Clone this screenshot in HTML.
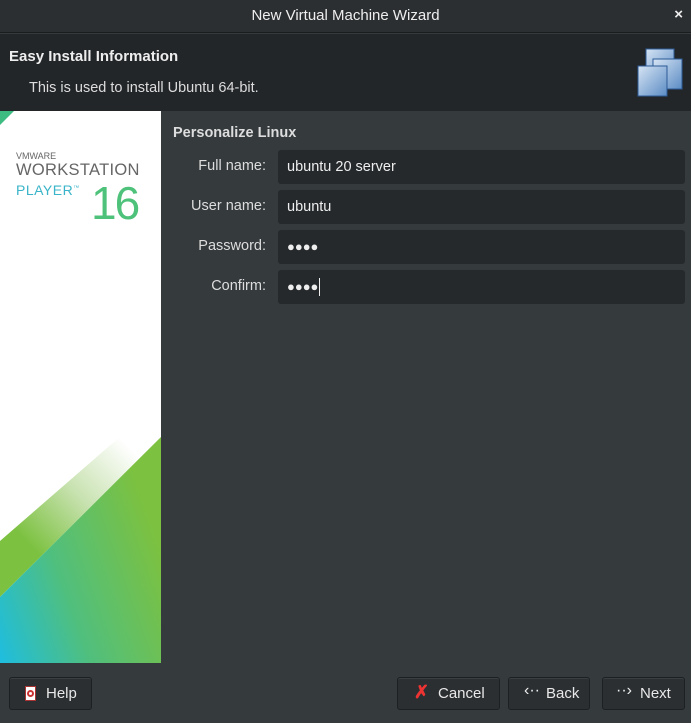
<!DOCTYPE html>
<html><head><meta charset="utf-8"><style>
*{margin:0;padding:0;box-sizing:border-box}
body{width:691px;height:723px;background:#353a3d;font-family:"Liberation Sans",sans-serif;color:#e8e8e8;position:relative;overflow:hidden;font-size:14px}
.abs{position:absolute}
.title{left:0;top:0;width:691px;height:33px;background:#2c2f32;border-bottom:1px solid #1a1c1e;text-align:center;line-height:32px;font-size:15px;color:#eee}
.hdr{left:0;top:34px;width:691px;height:77px;background:#232629}
.lbl{width:110px;text-align:right;color:#ddd;font-size:14.5px}
.inp{left:278px;width:407px;height:34px;background:#25292c;border-radius:3px;line-height:34px;padding-left:9px;font-size:14.5px;color:#eee}
.btn{top:677px;height:33px;background:#2b2f32;border:1px solid #1d2022;border-radius:3px;line-height:31px;font-size:15px;color:#e8e8e8;box-shadow:inset 0 1px 0 #3a3f42}
.dots{font-size:13px;letter-spacing:0px}
</style></head><body>
<div class="abs title">New Virtual Machine Wizard</div>
<div class="abs" style="right:8px;top:6px;font-size:15px;font-weight:bold;color:#eee">×</div>
<div class="abs hdr"></div>
<div class="abs" style="left:9px;top:48px;font-size:15px;font-weight:bold;color:#eee">Easy Install Information</div>
<div class="abs" style="left:29px;top:80px;font-size:14.5px;color:#ddd">This is used to install Ubuntu 64-bit.</div>
<svg class="abs" style="left:636px;top:48px" width="50" height="50">
<defs><linearGradient id="g" x1="0" y1="0" x2="1" y2="1"><stop offset="0" stop-color="#d6e4f4"/><stop offset="1" stop-color="#5c8cc4"/></linearGradient></defs>
<rect x="10" y="1" width="28" height="30" fill="url(#g)" stroke="#2c5a96"/>
<rect x="17" y="11" width="29" height="30" fill="url(#g)" stroke="#2c5a96"/>
<rect x="2" y="18" width="29" height="30" fill="url(#g)" stroke="#2c5a96"/>
</svg>
<svg class="abs" style="left:0;top:111px" width="161" height="552">
<defs>
<linearGradient id="gr" x1="0" y1="1" x2="1" y2="0.5"><stop offset="0" stop-color="#1ebde0"/><stop offset="0.45" stop-color="#50bf7e"/><stop offset="1" stop-color="#7cc140"/></linearGradient>
<linearGradient id="soft" x1="0.2" y1="0.75" x2="0.7" y2="0.15"><stop offset="0" stop-color="#7cc140"/><stop offset="0.5" stop-color="#c8e2b0"/><stop offset="1" stop-color="#ffffff"/></linearGradient>
</defs>
<rect width="161" height="552" fill="#fff"/>
<polygon points="161,290 0,430 0,486 161,326" fill="url(#soft)"/>
<polygon points="161,326 0,486 0,552 161,552" fill="url(#gr)"/>
<polygon points="0,0 14,0 0,14" fill="#3dbb80"/>
</svg>
<div class="abs" style="left:16px;top:151px;font-size:9px;color:#666">VMWARE</div>
<div class="abs" style="left:16px;top:161px;font-size:16.5px;color:#666;letter-spacing:0.3px">WORKSTATION</div>
<div class="abs" style="left:16px;top:182px;font-size:14px;color:#3ab4c8;letter-spacing:0.5px">PLAYER<sup style="font-size:6px">™</sup></div>
<div class="abs" style="left:91px;top:180px;font-size:46px;line-height:46px;color:#4ec27a;letter-spacing:-2px">16</div>
<div class="abs" style="left:173px;top:125px;font-size:14.5px;font-weight:bold;color:#ddd">Personalize Linux</div>
<div class="abs lbl" style="left:156px;top:158px">Full name:</div>
<div class="abs lbl" style="left:156px;top:198px">User name:</div>
<div class="abs lbl" style="left:156px;top:238px">Password:</div>
<div class="abs lbl" style="left:156px;top:278px">Confirm:</div>
<div class="abs inp" style="top:150px">ubuntu 20 server</div>
<div class="abs inp" style="top:190px">ubuntu</div>
<div class="abs inp" style="top:230px"><span class="dots">●●●●</span></div>
<div class="abs inp" style="top:270px"><span class="dots">●●●●</span><span style="display:inline-block;width:1px;height:18px;background:#eee;vertical-align:middle;margin-left:1px"></span></div>
<div class="abs btn" style="left:9px;width:83px;padding-left:36px">Help</div>
<div class="abs" style="left:25px;top:686px;width:11px;height:15px;background:#fff;border:1px solid #a33"><div style="margin:3px 1px;width:7px;height:7px;border-radius:50%;border:2px solid #c33"></div></div>
<div class="abs btn" style="left:397px;width:103px;padding-left:40px">Cancel</div>
<div class="abs" style="left:414px;top:682px;color:#e33;font-size:18px;font-weight:bold">✗</div>
<div class="abs btn" style="left:508px;width:82px;padding-left:37px">Back</div>
<div class="abs" style="left:524px;top:682px;font-size:16px;color:#eee">‹··</div>
<div class="abs btn" style="left:602px;width:83px;padding-left:37px">Next</div>
<div class="abs" style="left:616px;top:682px;font-size:16px;color:#eee">··›</div>
</body></html>
